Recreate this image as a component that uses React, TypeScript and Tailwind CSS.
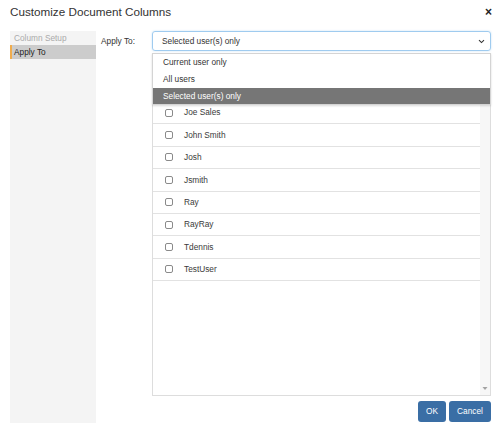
import React from "react"

const USERS = ["Joe Sales", "John Smith", "Josh", "Jsmith", "Ray", "RayRay", "Tdennis", "TestUser"]
const OPTIONS = ["Current user only", "All users", "Selected user(s) only"]

export default function App() {
  return (
    <div className="relative h-[430px] w-[500px] bg-white text-[#333] [font-family:'Liberation_Sans',Arial,sans-serif]">
      {/* header */}
      <div className="flex h-[24px] items-center justify-between pl-[10px] pr-[8px]">
        <div className="text-[11.7px] leading-none text-[#333]">Customize Document Columns</div>
        <div className="text-[12px] font-bold leading-none text-[#222]">×</div>
      </div>

      <div className="mt-[7px] flex pl-[10px] pr-[9px]">
        {/* sidebar */}
        <div className="h-[392px] w-[86px] bg-[#f4f4f4] pt-[1px]">
          <div className="flex h-[13px] items-center pl-[4px] text-[8.3px] text-[#aaa]">Column Setup</div>
          <div className="flex h-[14px] items-center border-l-2 border-[#f0ad4e] bg-[#cccccc] pl-[2px] text-[8.3px] text-[#222]">
            Apply To
          </div>
        </div>

        {/* label */}
        <div className="w-[56px] pl-[5px] pt-[4px] text-[8.3px] text-[#333]">Apply To:</div>

        {/* main column */}
        <div className="flex flex-1 flex-col">
          <div className="flex h-[20px] items-center justify-between rounded-[3px] border border-[#9fcbef] pl-[9px] pr-[4px] text-[8.3px] text-[#333] shadow-[0_0_2px_rgba(102,175,233,0.4)]">
            <span>Selected user(s) only</span>
            <svg width="7" height="5" viewBox="0 0 7 5" className="mr-[1px]">
              <path d="M1 1.2 L3.5 3.6 L6 1.2" fill="none" stroke="#333" strokeWidth="1.1" />
            </svg>
          </div>

          <div className="relative mt-[2px]">
            {/* user list */}
            <div className="flex h-[343px] border border-[#ddd] bg-white">
              <div className="flex-1 pt-[48px]">
                {USERS.map((u) => (
                  <div key={u} className="flex h-[22.4px] items-center border-b border-[#e2e2e2] pl-[12px] text-[8.3px] text-[#3a3a3a]">
                    <span className="h-[8px] w-[8px] rounded-[2px] border border-[#8a8a8a] bg-white" />
                    <span className="ml-[11px]">{u}</span>
                  </div>
                ))}
              </div>
              <div className="flex w-[10px] flex-col justify-end bg-[#f7f7f7] pb-[4px]">
                <svg width="10" height="5" viewBox="0 0 10 5">
                  <path d="M2.5 1 L7.5 1 L5 4 Z" fill="#a3a3a3" />
                </svg>
              </div>
            </div>

            {/* open dropdown */}
            <div className="absolute left-0 right-0 top-0 border border-[#d4d4d4] bg-white shadow-[0_1px_2px_rgba(0,0,0,0.15)]">
              {OPTIONS.map((o, i) => (
                <div
                  key={o}
                  className={
                    i === 2
                      ? "flex h-[16px] items-center bg-[#767676] pl-[10px] text-[8.3px] text-white"
                      : "flex h-[17px] items-center pl-[10px] text-[8.3px] text-[#333]"
                  }
                >
                  {o}
                </div>
              ))}
            </div>
          </div>

          {/* buttons */}
          <div className="mt-[5px] flex justify-end gap-[3px]">
            <button className="h-[21px] w-[28px] rounded-[3px] bg-[#3a6ea5] text-[8.3px] text-white">OK</button>
            <button className="h-[21px] w-[42px] rounded-[3px] bg-[#3a6ea5] text-[8.3px] text-white">Cancel</button>
          </div>
        </div>
      </div>
    </div>
  )
}
